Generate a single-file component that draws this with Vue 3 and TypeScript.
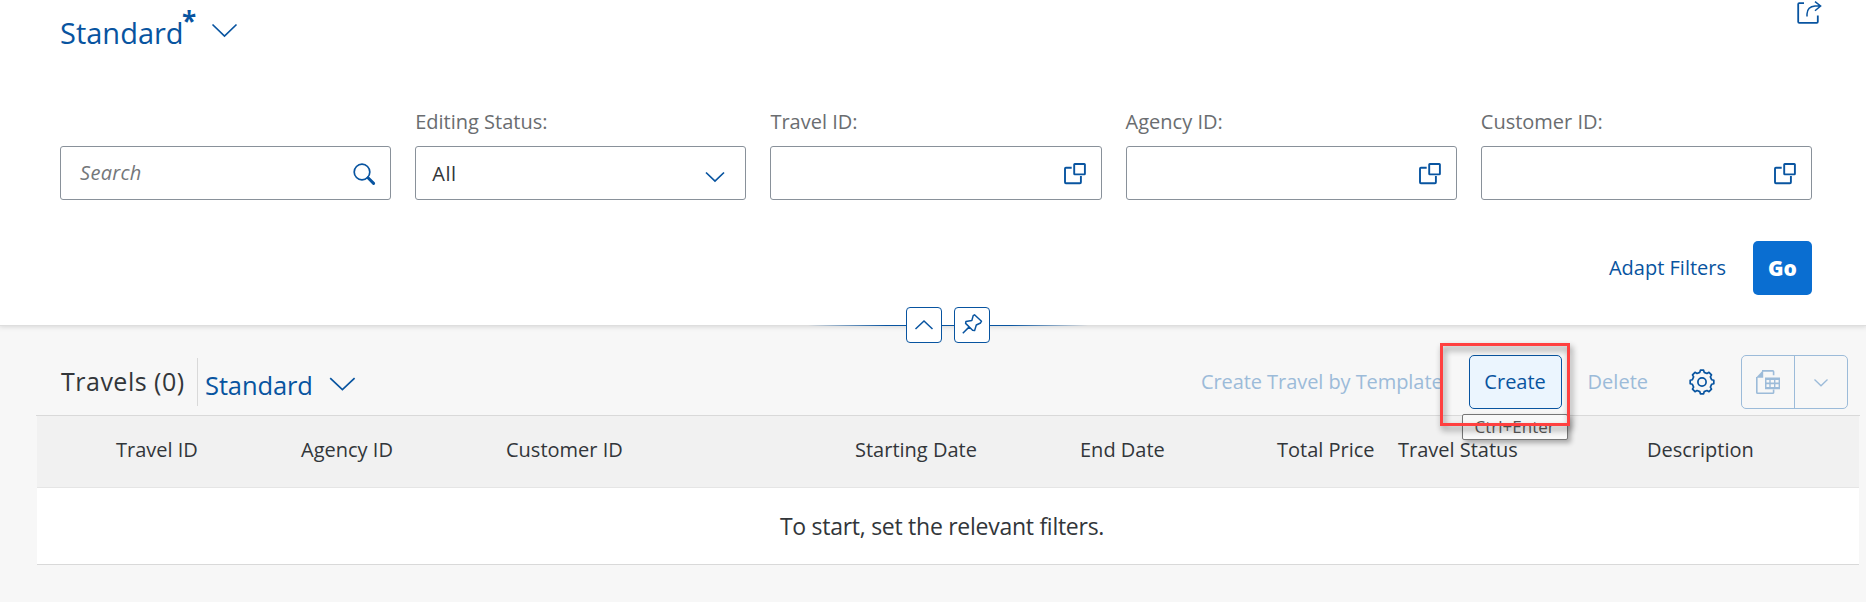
<script setup lang="ts">
interface FilterField {
  key: string
  label: string
  kind: 'search' | 'select' | 'valuehelp'
  value?: string
}

const fields: FilterField[] = [
  { key: 'search', label: '', kind: 'search' },
  { key: 'status', label: 'Editing Status:', kind: 'select', value: 'All' },
  { key: 'travel', label: 'Travel ID:', kind: 'valuehelp' },
  { key: 'agency', label: 'Agency ID:', kind: 'valuehelp' },
  { key: 'customer', label: 'Customer ID:', kind: 'valuehelp' },
]

const columns: string[] = [
  'Travel ID',
  'Agency ID',
  'Customer ID',
  'Starting Date',
  'End Date',
  'Total Price',
  'Travel Status',
  'Description',
]
</script>

<template>
  <main class="page">
    <header class="filter-bar">
      <div class="title-row">
        <div class="variant">
          <span class="variant-name">Standard</span><span class="dirty">*</span>
          <svg class="variant-arrow" width="27" height="15" viewBox="0 0 27 15"><path d="M1.5 1.5 13.5 13 25.5 1.5" /></svg>
        </div>
        <svg class="share" width="26" height="24" viewBox="0 0 26 24">
          <path d="M8 2.2H3.2Q2.2 2.2 2.2 3.2V20.8Q2.2 21.8 3.2 21.8H20.8Q21.8 21.8 21.8 20.8V14.5" stroke-width="1.8" />
          <path d="M11 15.5V13Q11.4 5.5 19 5H24.5M19 .6 24.6 5 19 9.7" stroke-width="1.5" />
        </svg>
      </div>

      <div class="fields">
        <div v-for="f in fields" :key="f.key" class="field">
          <label class="field-label">{{ f.label }}</label>
          <div class="input" :class="f.kind">
            <span v-if="f.kind === 'search'" class="placeholder">Search</span>
            <span v-else class="value">{{ f.value }}</span>
            <svg v-if="f.kind === 'search'" width="24" height="24" viewBox="0 0 24 24">
              <circle cx="10" cy="10" r="7.8" stroke-width="1.7" />
              <path d="M16 15.8 21.6 21.4" stroke-width="3" stroke-linecap="round" />
            </svg>
            <svg v-else-if="f.kind === 'select'" width="20" height="12" viewBox="0 0 20 12"><path d="M1 1.5 10 10 19 1.5" /></svg>
            <svg v-else width="24" height="24" viewBox="0 0 24 24">
              <path d="M8.7 5.8H2.9Q2 5.8 2 6.7V20.2Q2 21.2 2.9 21.2H17Q17.9 21.2 17.9 20.2V14" stroke-width="1.9" />
              <rect x="11.2" y="2" width="10.7" height="10.4" rx=".6" stroke-width="1.9" />
            </svg>
          </div>
        </div>
      </div>

      <div class="actions">
        <button class="link">Adapt Filters</button>
        <button class="go">Go</button>
      </div>

      <div class="handles">
        <i class="fade left"></i>
        <button class="handle">
          <svg width="34" height="34" viewBox="0 0 34 34"><path d="M8.5 21 17 13 25.5 21" /></svg>
        </button>
        <i class="joint"></i>
        <button class="handle">
          <svg width="34" height="34" viewBox="0 0 34 34">
            <path d="M19.5 6.8 26.5 13.2 25.5 15 21.3 17 19.6 22.6 17.6 22.2 10.6 15.4 10.9 13.6 16.8 12.6 18.2 7.6ZM14.5 18.6 7.8 25.2" stroke-linejoin="round" />
          </svg>
        </button>
        <i class="fade right"></i>
      </div>
    </header>

    <section class="table-section">
      <div class="toolbar">
        <h2 class="table-title">Travels (0)</h2>
        <i class="separator"></i>
        <span class="table-variant">Standard</span>
        <svg class="table-arrow" width="27" height="15" viewBox="0 0 27 15"><path d="M1.2 1.2 13.4 12.6 25.6 1.2" /></svg>
        <span class="spacer"></span>
        <button class="text-btn disabled template">Create Travel by Template</button>
        <div class="create-wrap">
          <button class="create">Create</button>
          <div class="tooltip">Ctrl+Enter</div>
          <div class="marker"></div>
        </div>
        <button class="text-btn disabled delete">Delete</button>
        <svg class="gear" width="26" height="26" viewBox="0 0 26 26">
          <path d="M10.8 3.4 11.4 1.2H14.6L15.2 3.4 18 4.5 20 3.3 22.5 5.8 21.4 7.9 22.6 10.7 24.8 11.3V14.7L22.6 15.3 21.4 18.1 22.5 20.2 20 22.7 18 21.5 15.2 22.6 14.6 24.8H11.4L10.8 22.6 8 21.5 6 22.7 3.5 20.2 4.6 18.1 3.4 15.3 1.2 14.7V11.3L3.4 10.7 4.6 7.9 3.5 5.8 6 3.3 8 4.5Z" stroke-linejoin="round" />
          <circle cx="13" cy="13" r="4.1" />
        </svg>
        <div class="export">
          <button class="export-main">
            <svg width="26" height="26" viewBox="0 0 26 26">
              <path d="M7 1.9H17.8Q18.6 1.9 18.6 2.8V6.2M18.6 20.6V23.4Q18.6 24.2 17.8 24.2H2.6Q1.8 24.2 1.8 23.4V8" stroke-width="1.6" />
              <path class="solid" d="M1 8.8 8.2 1.1V8.8Z" />
              <path class="solid" fill-rule="evenodd" d="M10 8.6H25V20.2H10ZM11.5 10.9V13.4H14.3V10.9ZM15.7 10.9V13.4H19V10.9ZM20.4 10.9V13.4H23.6V10.9ZM11.5 15.2V18H14.3V15.2ZM15.7 15.2V18H19V15.2ZM20.4 15.2V18H23.6V15.2Z" />
            </svg>
          </button>
          <button class="export-menu">
            <svg width="16" height="10" viewBox="0 0 16 10"><path d="M1.5 1.5 8 7.8 14.5 1.5" stroke-width="1.3" /></svg>
          </button>
        </div>
      </div>

      <div class="table">
        <div class="head-row">
          <span v-for="c in columns" :key="c" class="col">{{ c }}</span>
        </div>
        <div class="empty-row">To start, set the relevant filters.</div>
      </div>
    </section>
  </main>
</template>

<style>
body {
  margin: 0;
  background: #f7f7f7;
}
</style>

<style scoped>
.page {
  height: 602px;
  overflow: hidden;
  background: #f7f7f7;
  font: 20px/24px 'Open Sans', 'Noto Sans', sans-serif;
  color: #32363a;
}
* {
  box-sizing: border-box;
}
button {
  font: inherit;
  color: inherit;
  padding: 0;
  margin: 0;
  border: 0;
  background: none;
  white-space: nowrap;
}
svg {
  display: block;
  flex: none;
  fill: none;
  stroke: #0854a0;
  stroke-width: 1.7;
}
.filter-bar {
  position: relative;
  height: 325px;
  padding: 0 54px 0 60px;
  background: #fff;
  box-shadow: 0 0 0 1px #dedede, 0 1px 5px 1px rgba(0, 0, 0, 0.13);
}
.title-row {
  display: flex;
  justify-content: space-between;
  height: 110px;
  padding-top: 1px;
}
.variant {
  display: flex;
  color: #0854a0;
}
.variant-name {
  width: 119px;
  margin-top: 14px;
  font-size: 29px;
  line-height: 36px;
}
.dirty {
  margin: 8px 0 0 3px;
  width: 13px;
  font-size: 26px;
  line-height: 24px;
  font-weight: 700;
}
.variant-arrow {
  margin: 22px 0 0 16px;
}
.share {
  margin: 0 -10px 0 0;
}
.fields {
  display: grid;
  grid-template-columns: repeat(5, 1fr);
  gap: 24px;
}
.field-label {
  display: block;
  height: 24px;
  margin-bottom: 12px;
  color: #6a6d70;
}
.input {
  display: flex;
  align-items: center;
  justify-content: space-between;
  height: 54px;
  padding: 0 14px 0 16px;
  border: 1px solid #89919a;
  border-radius: 3px;
  background: #fff;
}
.input svg {
  margin-top: 1px;
}
.input.search {
  padding-left: 19px;
}
.input.select {
  padding-right: 20px;
}
.input.select svg {
  margin-top: 7px;
}
.placeholder {
  font-style: italic;
  color: #74777a;
  letter-spacing: 0.3px;
}
.value {
  margin-top: 1px;
  letter-spacing: 0.6px;
}
.actions {
  display: flex;
  align-items: center;
  justify-content: flex-end;
  gap: 27px;
  margin-top: 41px;
}
.link {
  color: #0854a0;
}
.go {
  width: 59px;
  height: 54px;
  border-radius: 5px;
  background: #0a6ed1;
  color: #fff;
  font-size: 21px;
  font-weight: 800;
}
.handles {
  position: absolute;
  left: 808px;
  top: 307px;
  display: flex;
  align-items: center;
  height: 36px;
}
.handle {
  width: 36px;
  height: 36px;
  border: 1px solid #0854a0;
  border-radius: 4px;
  background: #fff;
}
.handle svg {
  stroke-width: 1.5;
}
.fade,
.joint {
  height: 1px;
  background: #0854a0;
}
.fade {
  width: 98px;
}
.joint {
  width: 12px;
}
.left {
  background: linear-gradient(to left, #0854a0 20%, rgba(8, 84, 160, 0));
}
.right {
  background: linear-gradient(to right, #0854a0 20%, rgba(8, 84, 160, 0));
}
.toolbar {
  display: flex;
  align-items: center;
  height: 90px;
  margin: 0 6px 0 36px;
  padding: 22px 12px 0 24px;
  border-bottom: 1px solid #d9d9d9;
}
.table-section {
  padding-top: 1px;
}
.table-title {
  width: 136px;
  margin: -2px 0 0 1px;
  font-weight: 400;
  font-size: 25px;
  letter-spacing: 0.5px;
  white-space: nowrap;
}
.separator {
  width: 1px;
  height: 48px;
  margin: 0 7px 0 0;
  background: #d9d9d9;
}
.table-variant {
  width: 109px;
  margin-top: 7px;
  font-size: 25.5px;
  letter-spacing: -0.1px;
  color: #0854a0;
}
.table-arrow {
  margin: 6px 0 0 15px;
}
.spacer {
  flex: 1;
}
.disabled {
  color: #9cbbd9;
}
.template {
  letter-spacing: -0.07px;
}
.create-wrap {
  position: relative;
  margin: 0 26px 0 26px;
}
.create {
  display: block;
  width: 93px;
  height: 54px;
  border: 1px solid #0854a0;
  border-radius: 5px;
  background: #ebf5fe;
  color: #0854a0;
}
.tooltip {
  position: absolute;
  left: -7px;
  top: 59px;
  width: 106px;
  height: 26px;
  border: 1px solid #767676;
  border-radius: 2px;
  background: #f9f9f9;
  box-shadow: 3px 3px 5px rgba(0, 0, 0, 0.3);
  font-size: 17px;
  line-height: 24px;
  text-align: center;
  color: #575757;
}
.marker {
  position: absolute;
  left: -29px;
  top: -12px;
  width: 130px;
  height: 83px;
  border: 3px solid #ff4040;
  filter: drop-shadow(2px 4px 3px rgba(0, 0, 0, 0.45));
}
.gear {
  margin: 0 26px 0 41px;
}
.export {
  display: flex;
  width: 107px;
  height: 54px;
  border: 1px solid #9cbbd9;
  border-radius: 5px;
}
.export svg {
  stroke: #9cbbd9;
}
.export .solid {
  fill: #9cbbd9;
  stroke: none;
}
.export-main,
.export-menu {
  display: flex;
  align-items: center;
  justify-content: center;
  flex: 1;
}
.export-main {
  border-right: 1px solid #9cbbd9;
}
.export-menu svg {
  margin-top: 3px;
}
.table {
  margin: 0 7px 0 37px;
}
.head-row {
  display: grid;
  grid-template-columns: 185px 205px 349px 225px 197px 121px 249px 1fr;
  align-items: center;
  height: 72px;
  padding: 0 0 4px 79px;
  border-bottom: 1px solid #e5e5e5;
  background: #f1f1f1;
}
.col {
  white-space: nowrap;
}
.empty-row {
  display: flex;
  align-items: center;
  justify-content: center;
  height: 77px;
  padding-right: 12px;
  border-bottom: 1px solid #d9d9d9;
  background: #fff;
  font-size: 23px;
  letter-spacing: -0.27px;
}
</style>
